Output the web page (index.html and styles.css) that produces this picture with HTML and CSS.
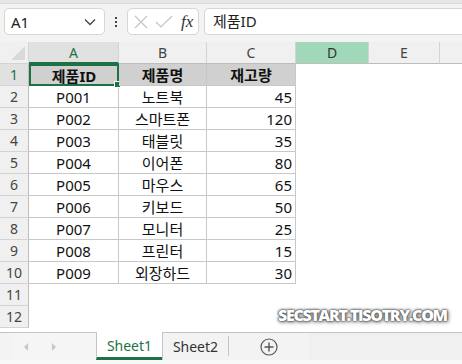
FILE: index.html
```html
<!DOCTYPE html>
<html>
<head>
    <title>Sheet</title>
    <link rel="stylesheet" href="styles.css">
</head>
<body>
    <div class="app">
        <div class="top-strip"></div>
        <div class="formula-bar">
            <div class="name-box">
                <span>A1</span>
                <svg width="12" height="8" viewBox="0 0 12 8"><path d="M1 1.5 L6 6.5 L11 1.5" fill="none" stroke="#444" stroke-width="1.3"/></svg>
            </div>
            <div class="dots"><i></i><i></i><i></i></div>
            <div class="fx-box">
                <svg width="16" height="16" viewBox="0 0 16 16"><path d="M2 2 L14 14 M14 2 L2 14" stroke="#c4c4c4" stroke-width="1.2"/></svg>
                <svg width="18" height="16" viewBox="0 0 18 16"><path d="M1 8 L6 13 L17 2" fill="none" stroke="#c4c4c4" stroke-width="1.2"/></svg>
                <span class="fx">fx</span>
            </div>
            <div class="formula-input">제품ID</div>
        </div>

        <div class="sheet">
            <div class="hdr corner"><span class="tri"></span></div>
            <div class="hdr col sel">A</div>
            <div class="hdr col">B</div>
            <div class="hdr col">C</div>
            <div class="hdr col green">D</div>
            <div class="hdr col">E</div>
            <div class="hdr col last"></div>

            <div class="hdr row sel">1</div>
            <div class="cell head active">제품ID</div>
            <div class="cell head">제품명</div>
            <div class="cell head">재고량</div>
            <div class="blank"></div><div class="blank"></div><div class="blank"></div>

            <div class="hdr row">2</div><div class="cell">P001</div><div class="cell">노트북</div><div class="cell num">45</div><div class="blank"></div><div class="blank"></div><div class="blank"></div>
            <div class="hdr row">3</div><div class="cell">P002</div><div class="cell">스마트폰</div><div class="cell num">120</div><div class="blank"></div><div class="blank"></div><div class="blank"></div>
            <div class="hdr row">4</div><div class="cell">P003</div><div class="cell">태블릿</div><div class="cell num">35</div><div class="blank"></div><div class="blank"></div><div class="blank"></div>
            <div class="hdr row">5</div><div class="cell">P004</div><div class="cell">이어폰</div><div class="cell num">80</div><div class="blank"></div><div class="blank"></div><div class="blank"></div>
            <div class="hdr row">6</div><div class="cell">P005</div><div class="cell">마우스</div><div class="cell num">65</div><div class="blank"></div><div class="blank"></div><div class="blank"></div>
            <div class="hdr row">7</div><div class="cell">P006</div><div class="cell">키보드</div><div class="cell num">50</div><div class="blank"></div><div class="blank"></div><div class="blank"></div>
            <div class="hdr row">8</div><div class="cell">P007</div><div class="cell">모니터</div><div class="cell num">25</div><div class="blank"></div><div class="blank"></div><div class="blank"></div>
            <div class="hdr row">9</div><div class="cell">P008</div><div class="cell">프린터</div><div class="cell num">15</div><div class="blank"></div><div class="blank"></div><div class="blank"></div>
            <div class="hdr row">10</div><div class="cell">P009</div><div class="cell">외장하드</div><div class="cell num">30</div><div class="blank"></div><div class="blank"></div><div class="blank"></div>
            <div class="hdr row">11</div><div class="blank wide"></div>
            <div class="hdr row">12</div><div class="blank wide"></div>

            <div class="watermark">SECSTART.TISOTRY.COM</div>
        </div>

        <div class="tab-bar">
            <div class="tab-nav">
                <svg width="8" height="10" viewBox="0 0 8 10"><path d="M6 1 L2 5 L6 9 Z" fill="#c8c8c8"/></svg>
                <svg width="8" height="10" viewBox="0 0 8 10"><path d="M2 1 L6 5 L2 9 Z" fill="#c8c8c8"/></svg>
            </div>
            <div class="tab active">Sheet1</div>
            <div class="tab">Sheet2</div>
            <div class="tab-sep"></div>
            <div class="tab-add">
                <svg width="18" height="18" viewBox="0 0 18 18"><circle cx="9" cy="9" r="8" fill="none" stroke="#555" stroke-width="1.2"/><path d="M9 4.5 V13.5 M4.5 9 H13.5" stroke="#555" stroke-width="1.4"/></svg>
            </div>
            <div class="tab-rest"></div>
        </div>
        <div class="status"></div>
    </div>
</body>
</html>
```

FILE: styles.css
```css
body {
    margin: 0;
    font-family: "Noto Sans", "Noto Sans CJK KR", sans-serif;
    background: #fff;
}
.app {
    width: 462px;
    height: 364px;
    overflow: hidden;
    display: flex;
    flex-direction: column;
}
.top-strip {
    height: 3px;
    background: #e6e6e6;
    border-bottom: 1px solid #dcdcdc;
}
.formula-bar {
    height: 38px;
    background: #f3f3f3;
    display: flex;
    align-items: flex-start;
    padding-top: 4px;
    box-sizing: border-box;
}
.name-box {
    margin-left: 4px;
    width: 101px;
    height: 27px;
    box-sizing: border-box;
    background: #fff;
    border: 1px solid #d6d6d6;
    border-radius: 5px;
    display: flex;
    align-items: center;
    justify-content: space-between;
    padding: 0 8px 0 6px;
    font-size: 15px;
    color: #222;
}
.dots {
    width: 22px;
    display: flex;
    flex-direction: column;
    align-items: center;
    gap: 2px;
    padding-top: 9px;
}
.dots i {
    width: 2px;
    height: 2px;
    background: #444;
}
.fx-box {
    width: 72px;
    height: 27px;
    box-sizing: border-box;
    background: #fff;
    border: 1px solid #d6d6d6;
    border-radius: 5px;
    display: flex;
    align-items: center;
    gap: 6px;
    padding-left: 5px;
}
.fx {
    font-family: "Liberation Serif", serif;
    font-style: italic;
    font-size: 17px;
    color: #333;
    margin-left: 2px;
}
.formula-input {
    margin-left: 5px;
    flex: 1;
    height: 27px;
    box-sizing: border-box;
    background: #fff;
    border: 1px solid #d6d6d6;
    border-right: none;
    border-radius: 5px 0 0 5px;
    padding-left: 8px;
    font-size: 15px;
    line-height: 25px;
    color: #222;
}
.sheet {
    position: relative;
    display: grid;
    grid-template-columns: 29px 90px 88px 89px 73px 71px 1fr;
    grid-auto-rows: 22px;
    height: 290px;
    background: #fff;
}
.hdr {
    background: #f0f0f0;
    color: #444;
    font-size: 14px;
    display: flex;
    align-items: center;
    justify-content: center;
    box-sizing: border-box;
    border-right: 1px solid #d4d4d4;
    border-bottom: 1px solid #d4d4d4;
}
.corner {
    position: relative;
    border-right: 1px solid #d4d4d4;
}
.tri {
    position: absolute;
    right: 3px;
    bottom: 3px;
    width: 0;
    height: 0;
    border-left: 14px solid transparent;
    border-bottom: 14px solid #d9d9d9;
}
.hdr.col {
    border-bottom: 1px solid #bdbdbd;
}
.hdr.sel {
    background: #e1e1e1;
    color: #1e7145;
}
.hdr.col.sel {
    border-bottom: 2px solid #1e7145;
}
.hdr.green {
    background: #a0d8b9;
    color: #333;
}
.hdr.last {
    border-right: none;
}
.hdr.row {
    border-right: 1px solid #bdbdbd;
}
.cell {
    font-size: 15px;
    color: #111;
    display: flex;
    align-items: center;
    justify-content: center;
    box-sizing: border-box;
    border-right: 1px solid #c8c8c8;
    border-bottom: 1px solid #c8c8c8;
}
.cell.num {
    justify-content: flex-end;
    padding-right: 3px;
}
.cell.head {
    background: #d0d0d0;
    font-weight: bold;
    position: relative;
}
.cell.active {
    border: 2px solid #1e7145;
}
.cell.active::after {
    content: "";
    position: absolute;
    right: -4px;
    bottom: -4px;
    width: 5px;
    height: 5px;
    background: #1e7145;
    border: 1px solid #fff;
}
.blank.wide {
    grid-column: span 6;
}
.watermark {
    position: absolute;
    left: 278px;
    top: 262px;
    font-family: "Open Sans", sans-serif;
    font-weight: 800;
    font-size: 16px;
    letter-spacing: -1.3px;
    color: #fff;
    text-shadow: 0 0 1px #444, 0 0 2px #555, 0 0 3px #666, 1px 1px 4px #666;
}
.tab-bar {
    height: 27px;
    border-top: 1px solid #c4c4c4;
    background: #f3f3f3;
    display: flex;
    font-size: 14px;
}
.tab-nav {
    width: 84px;
    margin-left: 12px;
    background: #f5f5f5;
    display: flex;
    align-items: center;
    gap: 20px;
    padding-left: 10px;
    box-sizing: border-box;
}
.tab {
    width: 66px;
    display: flex;
    align-items: center;
    justify-content: center;
    color: #333;
    box-sizing: border-box;
    margin-top: -1px;
    border-left: 1px solid #c4c4c4;
}
.tab.active {
    background: #fff;
    color: #1e7145;
    border-bottom: 3px solid #1e7145;
    padding-top: 2px;
}
.tab-sep {
    width: 1px;
    height: 20px;
    margin-top: 3px;
    background: #c4c4c4;
}
.tab-add {
    width: 80px;
    display: flex;
    align-items: center;
    justify-content: center;
    background: #f3f3f3;
}
.tab-rest {
    flex: 1;
    background: #f0f0f0;
}
.status {
    flex: 1;
    background: #f8f8f8;
}
```
